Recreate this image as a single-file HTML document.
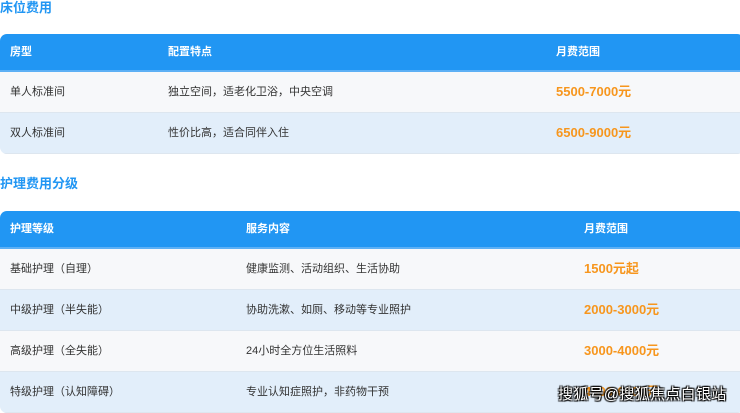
<!DOCTYPE html>
<html><head><meta charset="utf-8"><style>
body{margin:0;width:740px;height:411px;overflow:hidden;background:#fff;font-family:"Liberation Sans","Noto Sans CJK SC",sans-serif;position:relative}
.t{position:absolute;left:0;font-size:13px;font-weight:bold;color:#2196f3;line-height:16px}
.tb{position:absolute;left:0;width:744px;border-radius:7px;overflow:hidden}
.r{height:41px;position:relative;font-size:11px;color:#333;border-bottom:1px solid #dde6ef;box-sizing:border-box}
.r span{position:absolute;top:0;line-height:40px}
.h{height:38px;background:#2196f3;color:#fff;font-weight:bold;border-bottom:2px solid #5db0f5}
.h span{line-height:36px}
.a{background:#f7f8fa}.b{background:#e2eefa}
.p{color:#f7961d;font-weight:bold;font-size:13px}
.wm{position:absolute;left:558px;top:383px;font-size:15px;color:#fff;text-shadow:1px 1px 1px #000,-1px -1px 1px #000,1px -1px 1px #000,-1px 1px 1px #000;letter-spacing:0.3px}
</style></head><body>
<div class="t" style="top:0">床位费用</div>
<div class="tb" style="top:34px">
<div class="r h"><span style="left:10px">房型</span><span style="left:168px">配置特点</span><span style="left:556px">月费范围</span></div>
<div class="r a"><span style="left:10px">单人标准间</span><span style="left:168px">独立空间，适老化卫浴，中央空调</span><span class="p" style="left:556px">5500-7000元</span></div>
<div class="r b"><span style="left:10px">双人标准间</span><span style="left:168px">性价比高，适合同伴入住</span><span class="p" style="left:556px">6500-9000元</span></div>
</div>
<div class="t" style="top:176px">护理费用分级</div>
<div class="tb" style="top:211px">
<div class="r h"><span style="left:10px">护理等级</span><span style="left:246px">服务内容</span><span style="left:584px">月费范围</span></div>
<div class="r a"><span style="left:10px">基础护理（自理）</span><span style="left:246px">健康监测、活动组织、生活协助</span><span class="p" style="left:584px">1500元起</span></div>
<div class="r b"><span style="left:10px">中级护理（半失能）</span><span style="left:246px">协助洗漱、如厕、移动等专业照护</span><span class="p" style="left:584px">2000-3000元</span></div>
<div class="r a"><span style="left:10px">高级护理（全失能）</span><span style="left:246px">24小时全方位生活照料</span><span class="p" style="left:584px">3000-4000元</span></div>
<div class="r b"><span style="left:10px">特级护理（认知障碍）</span><span style="left:246px">专业认知症照护，非药物干预</span><span class="p" style="left:584px">4000-6000元</span></div>
</div>
<div class="wm">搜狐号@搜狐焦点白银站</div>
</body></html>
